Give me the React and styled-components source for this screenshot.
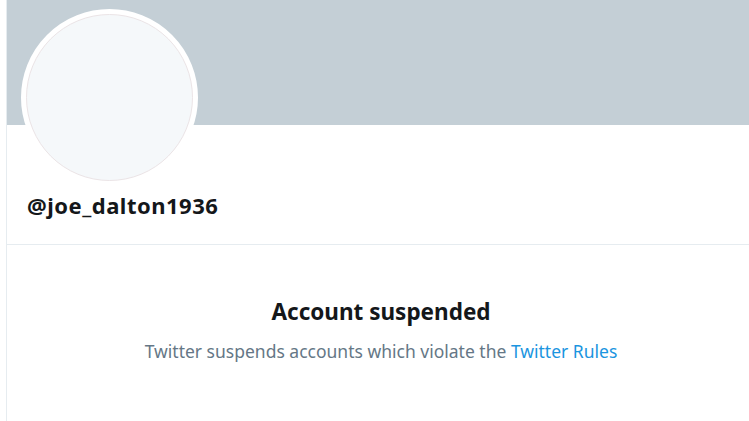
import React from 'react';
import styled, { createGlobalStyle } from 'styled-components';

const GlobalStyle = createGlobalStyle`
  html, body {
    margin: 0;
    padding: 0;
    background: #ffffff;
    overflow: hidden;
  }
  body {
    font-family: "Noto Sans", "Open Sans", sans-serif;
    color: #14171a;
  }
`;

const Column = styled.main`
  margin-left: 6px;
  width: 748px;
  height: 421px;
  border-left: 1px solid #e6ecf0;
  background: #ffffff;
`;

const Banner = styled.div`
  height: 125px;
  background: #c4cfd6;
`;

const ProfileHeader = styled.section`
  padding: 0 20px 25px;
  border-bottom: 1px solid #e6ecf0;
`;

const Avatar = styled.div`
  width: 167px;
  height: 167px;
  margin: -116px 0 0 -6px;
  border-radius: 50%;
  border: 5px solid #ffffff;
  background: #ffffff;
  display: flex;
  align-items: center;
  justify-content: center;
`;

const AvatarImage = styled.div`
  width: 165px;
  height: 165px;
  border-radius: 50%;
  border: 1px solid #ebe4e6;
  background: #f5f8fa;
`;

const Handle = styled.h1`
  margin: 5px 0 0;
  font-size: 22px;
  line-height: 28px;
  letter-spacing: 0.5px;
  font-weight: 700;
  color: #14171a;
`;

const Notice = styled.div`
  display: flex;
  flex-direction: column;
  align-items: center;
  padding-top: 53px;
  text-align: center;
`;

const NoticeTitle = styled.h2`
  margin: 0;
  font-size: 22.5px;
  line-height: 28px;
  font-weight: 700;
  color: #14171a;
`;

const NoticeText = styled.p`
  margin: 13px 0 0;
  font-size: 17.5px;
  line-height: 24px;
  color: #657786;
`;

const RulesLink = styled.a`
  color: #1b95e0;
  text-decoration: none;
`;

export default function App() {
  return (
    <>
      <GlobalStyle />
      <Column>
        <Banner />
        <ProfileHeader>
          <Avatar>
            <AvatarImage />
          </Avatar>
          <Handle>@joe_dalton1936</Handle>
        </ProfileHeader>
        <Notice>
          <NoticeTitle>Account suspended</NoticeTitle>
          <NoticeText>
            Twitter suspends accounts which violate the{' '}
            <RulesLink href="#rules">Twitter Rules</RulesLink>
          </NoticeText>
        </Notice>
      </Column>
    </>
  );
}
